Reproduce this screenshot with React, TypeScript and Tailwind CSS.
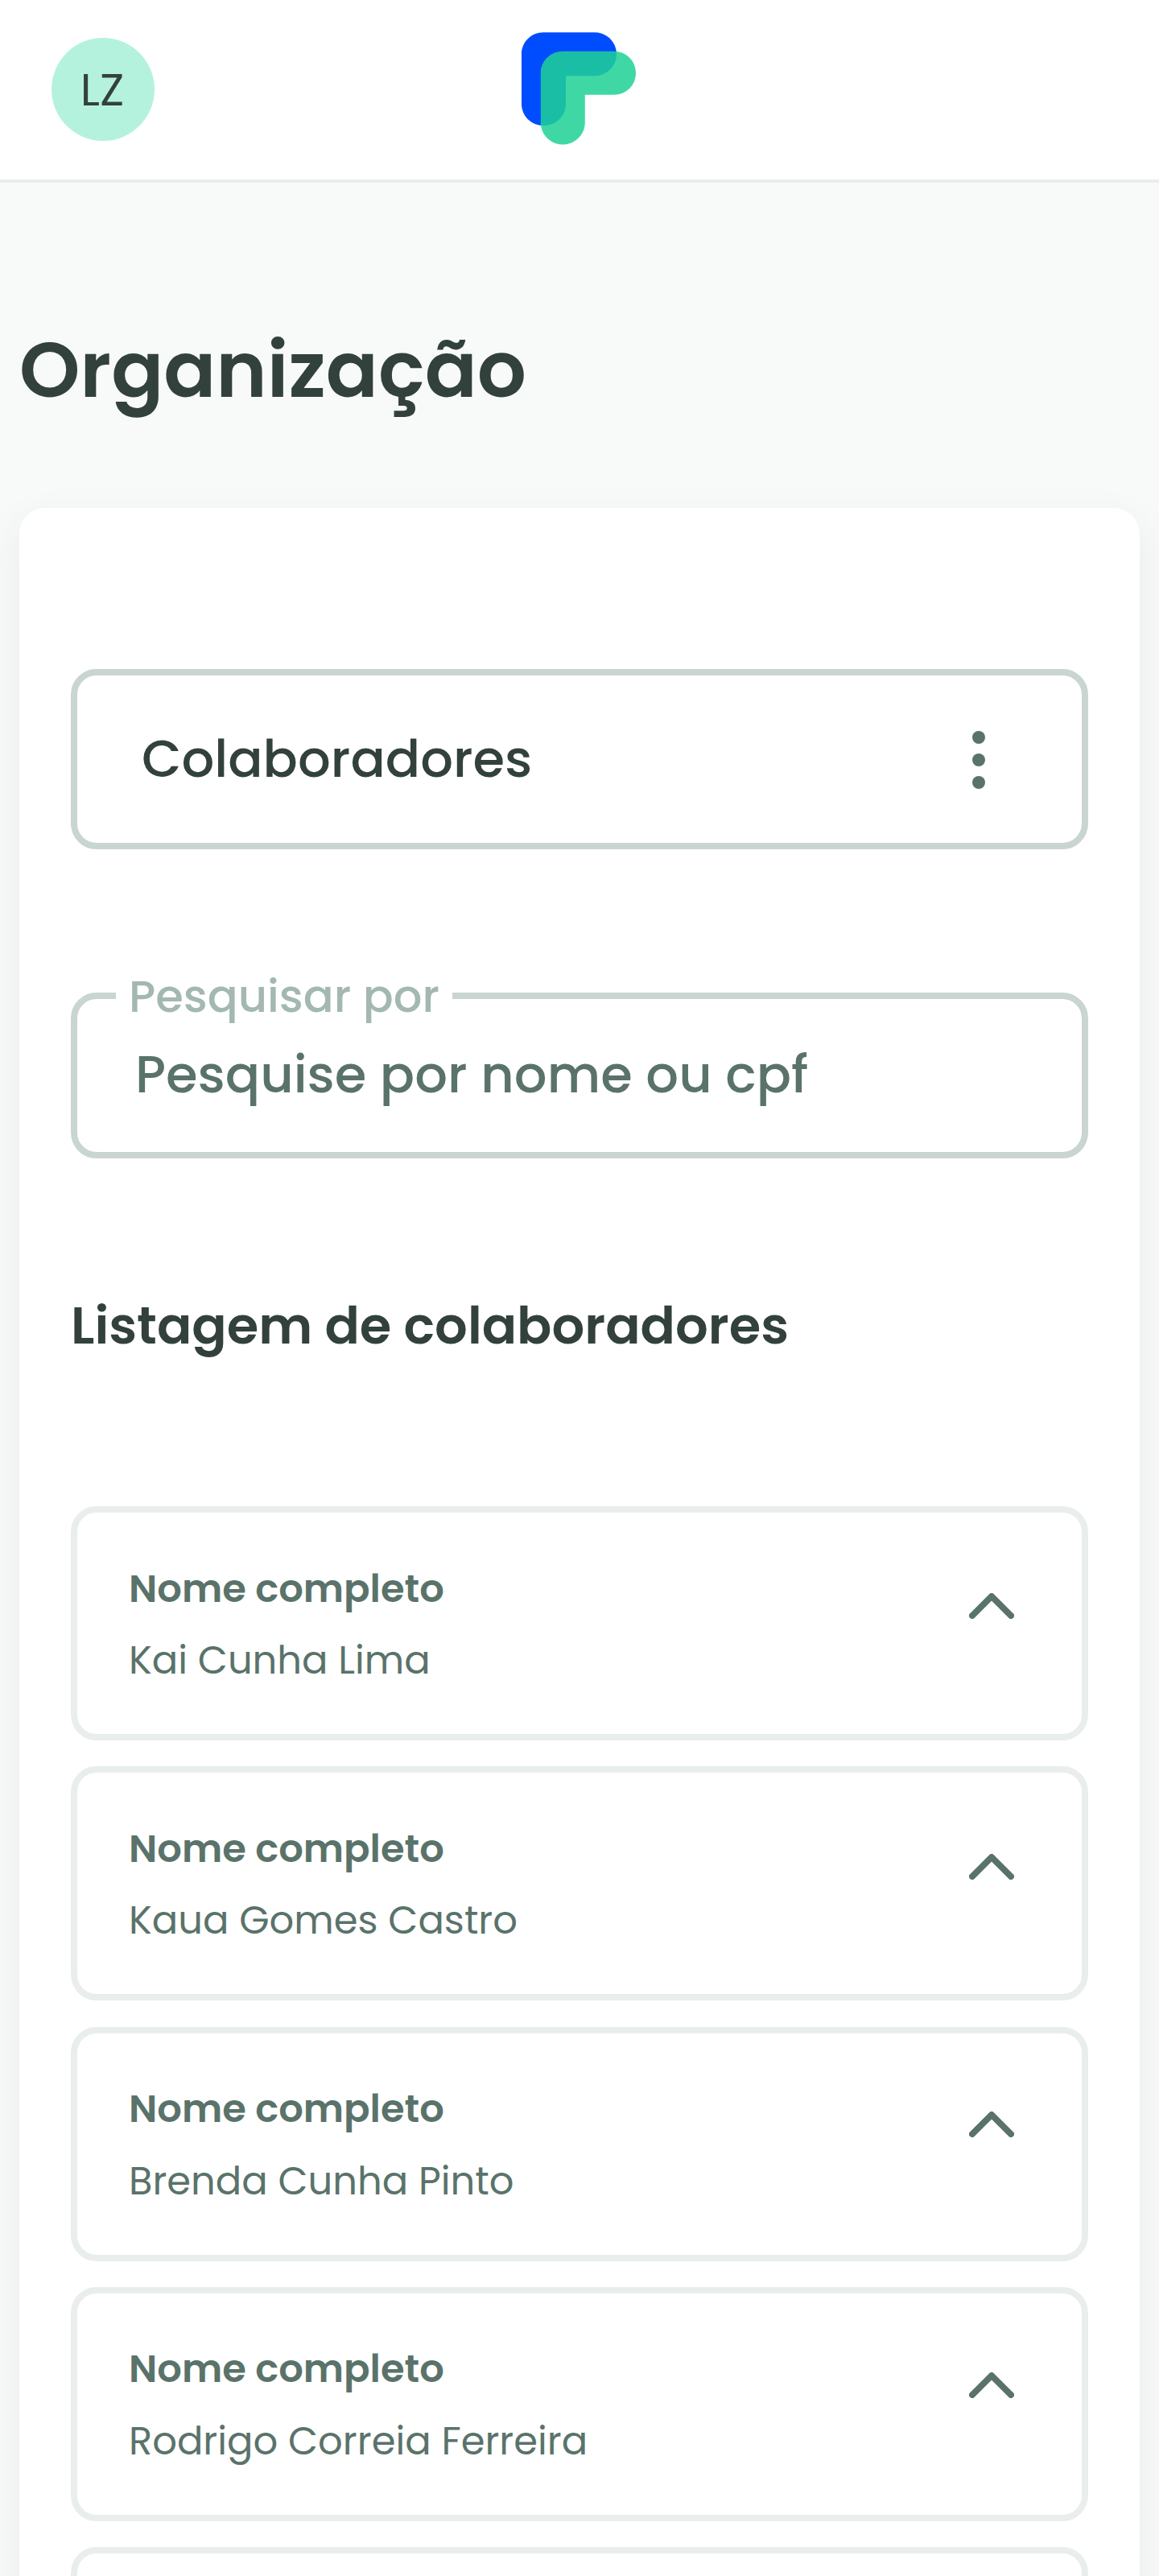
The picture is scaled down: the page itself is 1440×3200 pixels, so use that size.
const collaborators = [
  { name: 'Kai Cunha Lima', chevron: 'mt-[100px]' },
  { name: 'Kaua Gomes Castro', chevron: 'mt-[100.75px]' },
  { name: 'Brenda Cunha Pinto', chevron: 'mt-[97.5px]' },
  { name: 'Rodrigo Correia Ferreira', chevron: 'mt-[98.25px]' },
];

const cardClass = 'h-[291px] shrink-0 rounded-[32px] border-8 border-[#e9eeec]';

function Logo() {
  return (
    <svg className="-ml-0.5 shrink-0" width="142" height="140" viewBox="0 0 142 140" aria-label="Logo">
      <path
        fill="#004cff"
        d="M27 0.3H91C106 0.3 118 12.3 118 27.3C118 42.3 106 54.3 91 54.3H55V89C55 104 43 116 27.5 116C12 116 0 104 0 89V27.3C0 12.3 12 0.3 27 0.3Z"
      />
      <path
        fill="#1ed196"
        fillOpacity="0.855"
        d="M51 23.7H115C130 23.7 142 35.7 142 50.7C142 65.7 130 77.7 115 77.7H78.8V112.3C78.8 127.3 66.5 139.6 51.3 139.6C36 139.6 23.8 127.3 23.8 112.3V50.7C23.8 35.7 36 23.7 51 23.7Z"
      />
    </svg>
  );
}

function Header() {
  return (
    <header className="grid h-[227px] grid-cols-3 border-b-4 border-[#ebeded] bg-white px-16">
      <div className="mt-[47px] size-32 rounded-full bg-[#b5f2de] pt-[23px] pr-0.5 text-center text-[56px] leading-[83px]">
        LZ
      </div>
      <div className="mt-10 flex justify-center">
        <Logo />
      </div>
    </header>
  );
}

function CollaboratorCard({ name, chevron }: { name: string; chevron: string }) {
  return (
    <li className={`${cardClass} flex justify-between pr-[84px] pl-16 text-5xl text-[#5a736a]`}>
      <div className="flex flex-col gap-[16.5px] pt-[57.5px]">
        <p className="leading-[73px] font-semibold">Nome completo</p>
        <p className="leading-[73px]">{name}</p>
      </div>
      <svg className={chevron} width="56" height="32" viewBox="0 0 56 32" fill="none">
        <path
          d="M4 28L28 4L52 28"
          stroke="#5a736a"
          strokeWidth="8"
          strokeLinecap="round"
          strokeLinejoin="round"
        />
      </svg>
    </li>
  );
}

export default function App() {
  return (
    <div className="h-[3200px] w-[1440px] overflow-hidden bg-[#f8faf9] font-[Poppins,Inter,sans-serif] text-[#33413c]">
      <Header />
      <main className="px-6 pt-40">
        <h1 className="text-8xl leading-[145px] font-semibold">Organização</h1>

        <section className="mt-[99px] h-[2700px] rounded-[32px] bg-white px-16 pt-[200px] shadow-[0_16px_48px_rgba(50,64,60,0.08)]">
          <div className="flex h-56 justify-between rounded-[32px] border-8 border-[#c9d5d1] pr-30 pl-20">
            <span className="pt-14 text-[64px] leading-[95px] font-medium">Colaboradores</span>
            <div className="mt-px flex flex-col justify-center gap-3">
              <span className="size-4 rounded-full bg-[#5a736a]" />
              <span className="size-4 rounded-full bg-[#5a736a]" />
              <span className="size-4 rounded-full bg-[#5a736a]" />
            </div>
          </div>

          <div className="relative mt-[178px] h-[206px] rounded-[32px] border-8 border-[#c9d5d1] pt-[46px] pl-[72px]">
            <span className="absolute -top-[45px] left-12 bg-white px-4 text-[56px] leading-[83px] font-medium whitespace-nowrap text-[#a3b8b0]">
              Pesquisar por
            </span>
            <p className="relative text-[64px] leading-[95px] font-medium text-[#5a736a]">
              Pesquise por nome ou cpf
            </p>
          </div>

          <h2 className="mt-40 text-[64px] leading-[95px] font-semibold">
            Listagem de colaboradores
          </h2>

          <ul className="mt-[177px] flex flex-col gap-[32.25px]">
            {collaborators.map((c) => (
              <CollaboratorCard key={c.name} name={c.name} chevron={c.chevron} />
            ))}
            <li className={cardClass} />
          </ul>
        </section>
      </main>
    </div>
  );
}
